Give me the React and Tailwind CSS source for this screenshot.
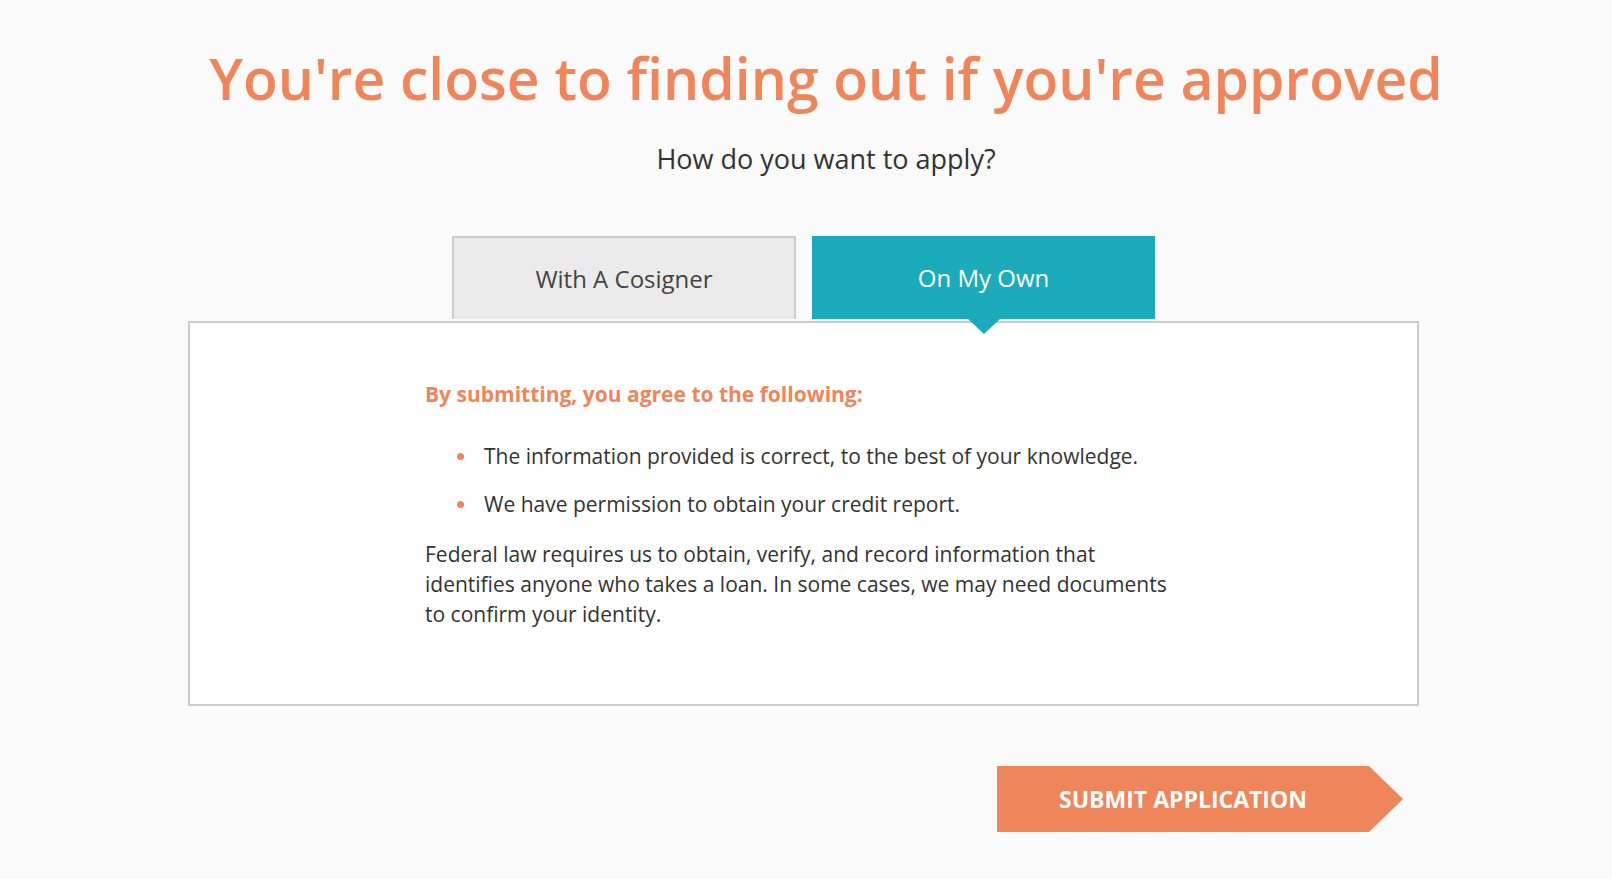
export default function App() {
  return (
    <div className="min-h-[879px] w-full bg-[#fafafa] font-['Open_Sans',sans-serif] text-[#333]">
      <div className="pl-[40px] pt-[38px] text-center">
        <h1 className="text-[57px] font-semibold leading-[80px] text-[#f0855a]">
          You're close to finding out if you're approved
        </h1>
        <p className="mt-[24px] text-[27px] leading-[34px] text-[#333]">How do you want to apply?</p>
      </div>

      <div className="ml-[188px] mt-[60px] w-[1231px]">
        <div className="flex justify-center gap-[16px]">
          <button className="h-[83px] w-[344px] border-2 border-b-0 border-[#cccccc] bg-[#ebebeb] text-[24px] text-[#444]">
            With A Cosigner
          </button>
          <div className="relative flex h-[83px] w-[343px] items-center justify-center bg-[#1babbb] text-[24px] text-white">
            On My Own
            <svg className="absolute left-1/2 top-full z-10 -ml-[16px]" width="32" height="15" viewBox="0 0 32 15">
              <polygon points="0,0 32,0 16,15" fill="#1babbb" />
            </svg>
          </div>
        </div>
        <div className="mt-[2px] border-2 border-[#cccccc] bg-white pb-[75px] pt-[57px]">
          <div className="mx-auto w-[757px] text-[21px]">
            <h2 className="text-[21px] font-bold leading-[28px] text-[#f0855a]">
              By submitting, you agree to the following:
            </h2>
            <ul className="mt-[33px] flex flex-col gap-[18px]">
              <li className="flex items-center leading-[30px]">
                <span className="ml-[32px] mr-[20px] h-[7px] w-[7px] shrink-0 rounded-full bg-[#f0855a]" />
                The information provided is correct, to the best of your knowledge.
              </li>
              <li className="flex items-center leading-[30px]">
                <span className="ml-[32px] mr-[20px] h-[7px] w-[7px] shrink-0 rounded-full bg-[#f0855a]" />
                We have permission to obtain your credit report.
              </li>
            </ul>
            <p className="mt-[20px] leading-[30px]">
              Federal law requires us to obtain, verify, and record information that identifies anyone who takes a loan. In some cases, we may need documents to confirm your identity.
            </p>
          </div>
        </div>
        <div className="mt-[60px] flex justify-end pr-[16px]">
          <button className="flex h-[66px] items-stretch">
            <span className="flex w-[372px] items-center justify-center bg-[#ef855a] text-[23px] font-bold text-white">
              SUBMIT APPLICATION
            </span>
            <svg width="34" height="66" viewBox="0 0 34 66">
              <polygon points="0,0 0,66 34,33" fill="#ef855a" />
            </svg>
          </button>
        </div>
      </div>
    </div>
  );
}
